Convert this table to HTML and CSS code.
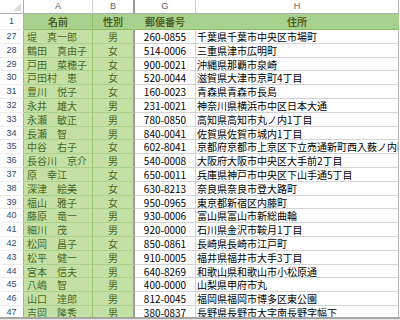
FILE: index.html
```html
<!DOCTYPE html>
<html lang="ja">
<head>
<meta charset="utf-8">
<link rel="stylesheet" href="styles.css">
</head>
<body>
<div class="sheet">
  <div class="hrow">
    <div class="corner"><span class="tri"></span></div>
    <div class="colh">A</div>
    <div class="colh">B</div>
    <div class="colh gap">G</div>
    <div class="colh">H</div>
  </div>
  <div class="trow">
    <div class="num">1</div>
    <div class="th">名前</div>
    <div class="th">性別</div>
    <div class="th gap">郵便番号</div>
    <div class="th">住所</div>
  </div>
  <div class="row"><div class="num">27</div><div class="nm">堤　真一郎</div><div class="sx">男</div><div class="zip">260-0855</div><div class="ad">千葉県千葉市中央区市場町</div></div>
  <div class="row"><div class="num">28</div><div class="nm">鶴田　真由子</div><div class="sx">女</div><div class="zip">514-0006</div><div class="ad">三重県津市広明町</div></div>
  <div class="row"><div class="num">29</div><div class="nm">戸田　菜穂子</div><div class="sx">女</div><div class="zip">900-0021</div><div class="ad">沖縄県那覇市泉崎</div></div>
  <div class="row"><div class="num">30</div><div class="nm">戸田村　恵</div><div class="sx">女</div><div class="zip">520-0044</div><div class="ad">滋賀県大津市京町4丁目</div></div>
  <div class="row"><div class="num">31</div><div class="nm">豊川　悦子</div><div class="sx">女</div><div class="zip">160-0023</div><div class="ad">青森県青森市長島</div></div>
  <div class="row"><div class="num">32</div><div class="nm">永井　雄大</div><div class="sx">男</div><div class="zip">231-0021</div><div class="ad">神奈川県横浜市中区日本大通</div></div>
  <div class="row"><div class="num">33</div><div class="nm">永瀬　敏正</div><div class="sx">男</div><div class="zip">780-0850</div><div class="ad">高知県高知市丸ノ内1丁目</div></div>
  <div class="row"><div class="num">34</div><div class="nm">長瀬　智</div><div class="sx">男</div><div class="zip">840-0041</div><div class="ad">佐賀県佐賀市城内1丁目</div></div>
  <div class="row"><div class="num">35</div><div class="nm">中谷　右子</div><div class="sx">女</div><div class="zip">602-8041</div><div class="ad">京都府京都市上京区下立売通新町西入薮ノ内町</div></div>
  <div class="row"><div class="num">36</div><div class="nm">長谷川　京介</div><div class="sx">男</div><div class="zip">540-0008</div><div class="ad">大阪府大阪市中央区大手前2丁目</div></div>
  <div class="row"><div class="num">37</div><div class="nm">原　幸江</div><div class="sx">女</div><div class="zip">650-0011</div><div class="ad">兵庫県神戸市中央区下山手通5丁目</div></div>
  <div class="row"><div class="num">38</div><div class="nm">深津　絵美</div><div class="sx">女</div><div class="zip">630-8213</div><div class="ad">奈良県奈良市登大路町</div></div>
  <div class="row"><div class="num">39</div><div class="nm">福山　雅子</div><div class="sx">女</div><div class="zip">950-0965</div><div class="ad">東京都新宿区内藤町</div></div>
  <div class="row"><div class="num">40</div><div class="nm">藤原　竜一</div><div class="sx">男</div><div class="zip">930-0006</div><div class="ad">富山県富山市新総曲輪</div></div>
  <div class="row"><div class="num">41</div><div class="nm">細川　茂</div><div class="sx">男</div><div class="zip">920-0000</div><div class="ad">石川県金沢市鞍月1丁目</div></div>
  <div class="row"><div class="num">42</div><div class="nm">松岡　昌子</div><div class="sx">女</div><div class="zip">850-0861</div><div class="ad">長崎県長崎市江戸町</div></div>
  <div class="row"><div class="num">43</div><div class="nm">松平　健一</div><div class="sx">男</div><div class="zip">910-0005</div><div class="ad">福井県福井市大手3丁目</div></div>
  <div class="row"><div class="num">44</div><div class="nm">宮本　信夫</div><div class="sx">男</div><div class="zip">640-8269</div><div class="ad">和歌山県和歌山市小松原通</div></div>
  <div class="row"><div class="num">45</div><div class="nm">八嶋　智</div><div class="sx">男</div><div class="zip">400-0000</div><div class="ad">山梨県甲府市丸</div></div>
  <div class="row"><div class="num">46</div><div class="nm">山口　達郎</div><div class="sx">男</div><div class="zip">812-0045</div><div class="ad">福岡県福岡市博多区東公園</div></div>
  <div class="row"><div class="num">47</div><div class="nm">吉岡　隆秀</div><div class="sx">男</div><div class="zip">380-0837</div><div class="ad">長野県長野市大字南長野字幅下</div></div>
</div>
<div class="frame"></div>
</body>
</html>
```
FILE: styles.css
```css
* { box-sizing: border-box; margin: 0; padding: 0; }
html, body { width: 400px; height: 320px; overflow: hidden; background: #ffffff; }
body { font-family: "Noto Sans CJK JP", "Noto Sans", sans-serif; font-size: 10px; color: #000; }

.sheet { width: 399px; }

.hrow, .trow, .row {
  display: grid;
  grid-template-columns: 24px 69px 42px 61px 203px;
}

.hrow { height: 14px; }
.trow { height: 16px; }
.row { height: 13.8px; }

.hrow > div, .trow > div, .row > div {
  border-right: 1px solid #d4d4d4;
  border-bottom: 1px solid #d4d4d4;
  white-space: nowrap;
  overflow: hidden;
}

/* column header row */
.corner { position: relative; border-bottom-color: #ababab !important; border-right-color: #ababab !important; }
.tri {
  position: absolute; right: 2px; bottom: 2px;
  width: 0; height: 0;
  border-left: 8px solid transparent;
  border-bottom: 8px solid #dcdcdc;
}
.colh {
  font-family: "Liberation Sans", sans-serif;
  font-size: 9px;
  line-height: 13px;
  color: #606060;
  text-align: center;
  border-bottom-color: #ababab !important;
}
.hrow > div:nth-child(3), .trow > div:nth-child(3), .row > div:nth-child(3) {
  border-right: 2px solid #9a9a9a;
}
.hrow > div:last-child, .trow > div:last-child, .row > div:last-child {
  border-right-color: #b4b4b4;
}

/* row numbers */
.num {
  font-family: "Liberation Sans", sans-serif;
  font-size: 9px;
  color: #2f4a73;
  text-align: center;
  background: #ffffff;
  border-right-color: #ababab !important;
  border-bottom-color: #ececec !important;
}
.row .num { line-height: 13px; }
.trow .num { line-height: 15px; }

/* title row */
.th {
  background: #a9d18e;
  color: #4f6228;
  font-weight: bold;
  text-align: center;
  line-height: 15px;
  border-bottom-color: #8cbd62 !important;
  border-right-color: #a9d18e !important;
}
.trow .th:nth-child(2) { border-right-color: #92c36a !important; }

/* data */
.row .nm, .row .sx {
  background: #c5e0a5;
  color: #4a6a1e;
  line-height: 13px;
  border-bottom-color: #abd28a;
}
.row .nm { padding-left: 3px; border-right-color: #98c46e; }
.row .sx { text-align: center; }
.row .zip, .row .ad { line-height: 13px; }
.row .zip { text-align: center; }
.row .ad { padding-left: 1px; }

.frame {
  position: fixed; left: 0; right: 0; top: 317px; height: 3px;
  border-top: 2px solid #a6a6a6;
  background: #e8e8e8;
}
```
